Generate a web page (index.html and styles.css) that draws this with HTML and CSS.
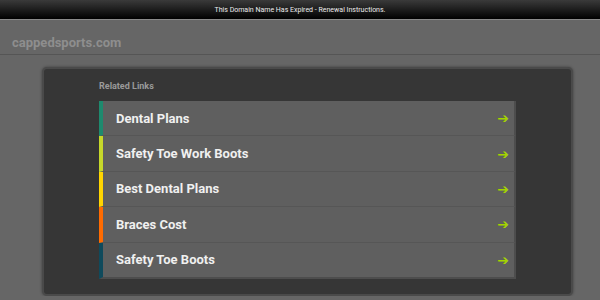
FILE: index.html
```html
<!DOCTYPE html>
<html lang="en">
<head>
    <meta charset="UTF-8">
    <title>cappedsports.com</title>
    <link rel="stylesheet" href="styles.css">
</head>
<body>
    <div id="topBar">
        <p class="topText">This Domain Name Has Expired - Renewal Instructions.</p>
    </div>
    <div id="header">
        <p class="domainName">cappedsports.com</p>
    </div>
    <div id="main">
        <div id="panel">
            <p class="relatedText">Related Links</p>
            <ul class="linkList">
                <li class="linkRow teal"><span>Dental Plans</span><span class="arrow">&#10132;</span></li>
                <li class="linkRow lime"><span>Safety Toe Work Boots</span><span class="arrow">&#10132;</span></li>
                <li class="linkRow yellow"><span>Best Dental Plans</span><span class="arrow">&#10132;</span></li>
                <li class="linkRow orange"><span>Braces Cost</span><span class="arrow">&#10132;</span></li>
                <li class="linkRow navy"><span>Safety Toe Boots</span><span class="arrow">&#10132;</span></li>
            </ul>
        </div>
    </div>
</body>
</html>
```

FILE: styles.css
```css
body{
    margin: 0;
    padding: 0;
    background-color: #666666;
    font-family: Roboto, 'Liberation Sans', sans-serif;
    overflow: hidden;
}

#topBar{
    height: 19px;
    background: linear-gradient(#3a3a3a, #000000);
    border-bottom: 1px solid #8a8a8a;
    display: flex;
    justify-content: center;
    align-items: center;
}

.topText{
    margin: 0;
    color: #ececec;
    font-size: 7px;
}

#header{
    height: 34px;
    border-bottom: 1px solid #555555;
    display: flex;
    align-items: center;
    padding-left: 12px;
}

.domainName{
    margin: 0;
    padding-top: 10px;
    font-size: 13px;
    font-weight: bold;
    color: #8e8e8e;
}

#main{
    padding: 12px 0 0 42px;
}

#panel{
    width: 531px;
    height: 229px;
    background-color: #363636;
    border: 2px solid #4a4a4a;
    border-radius: 5px;
    box-shadow: 0 0 3px rgba(0, 0, 0, 0.4);
    padding: 0 0 0 55px;
    box-sizing: border-box;
}

.relatedText{
    margin: 0;
    padding: 12px 0 0 0;
    height: 20px;
    font-size: 9px;
    font-weight: bold;
    color: #9a9a9a;
}

.linkList{
    list-style: none;
    margin: 0;
    padding: 0;
    width: 417px;
}

.linkRow{
    height: 34.4px;
    background-color: #5f5f5f;
    border-left: 4px solid;
    border-right: 2px solid #4d4d4d;
    border-bottom: 1px solid #565656;
    display: flex;
    justify-content: space-between;
    align-items: center;
    padding: 0 5px 0 13px;
    font-size: 13px;
    font-weight: bold;
    color: #f0f0f0;
}

.linkRow:last-child{
    border-bottom: 2px solid #4d4d4d;
}

.arrow{
    color: #a4d400;
    font-size: 14px;
    font-weight: bold;
    font-family: 'DejaVu Sans', sans-serif;
}

.teal{ border-left-color: #1e8a6e; }
.lime{ border-left-color: #c6d82a; }
.yellow{ border-left-color: #ffd500; }
.orange{ border-left-color: #ff6b00; }
.navy{ border-left-color: #0f4a5c; }
```
